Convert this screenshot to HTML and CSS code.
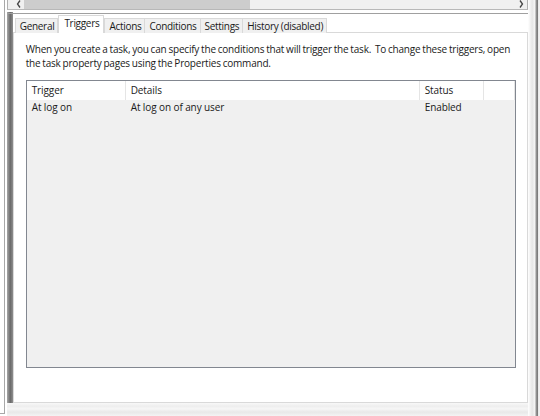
FILE: index.html
```html
<!DOCTYPE html>
<html>
<head>
<meta charset="utf-8">
<link rel="stylesheet" href="styles.css">
</head>
<body>
<div class="screen">
  <div class="edge-left"></div>
  <div class="shadow-band"></div>
  <div class="dialog">
    <div class="hscroll">
      <svg class="arrow" width="16" height="10" viewBox="0 0 16 10"><path d="M12 0.5 L9.5 4 L12 7.5" fill="none" stroke="#444" stroke-width="1.3"/></svg>
      <div class="track"><div class="thumb"></div></div>
      <svg class="arrow" width="12" height="10" viewBox="0 0 12 10"><path d="M5 0.5 L7.5 4 L5 7.5" fill="none" stroke="#444" stroke-width="1.3"/></svg>
    </div>
    <div class="dialog-body">
      <div class="tabs">
        <div class="tab">General</div>
        <div class="tab active">Triggers</div>
        <div class="tab">Actions</div>
        <div class="tab">Conditions</div>
        <div class="tab">Settings</div>
        <div class="tab">History (disabled)</div>
      </div>
      <div class="panel">
        <p class="desc">When you create a task, you can specify the conditions that will trigger the task.&nbsp; To change these triggers, open<br>the task property pages using the Properties command.</p>
        <div class="list">
          <div class="list-head">
            <div class="col c1">Trigger</div>
            <div class="col c2">Details</div>
            <div class="col c3">Status</div>
            <div class="col c4"></div>
          </div>
          <div class="list-row">
            <div class="cell c1">At log on</div>
            <div class="cell c2">At log on of any user</div>
            <div class="cell c3">Enabled</div>
          </div>
        </div>
      </div>
      <div class="footer"></div>
    </div>
  </div>
  <div class="edge-right"></div>
</div>
</body>
</html>
```

FILE: styles.css
```css
* { box-sizing: border-box; }
html, body { margin: 0; padding: 0; }
body {
  width: 540px;
  height: 416px;
  overflow: hidden;
  background: #ffffff;
  font-family: "Open Sans", "Noto Sans", sans-serif;
  font-size: 10px;
  letter-spacing: -0.1px;
  color: #1a1a1a;
}
.screen {
  display: flex;
  height: 416px;
}
.edge-left {
  width: 6px;
  height: 414px;
  border-right: 1px solid #a8a8a8;
  border-bottom: 1px solid #a8a8a8;
  background: #fff;
}
.shadow-band {
  width: 6px;
  margin-left: 2px;
  margin-top: 12px;
  margin-bottom: 11px;
  background: linear-gradient(to right, #a8a8a8, #6a6a6a 55%, #8e8e8e);
}
.dialog {
  flex: 1;
  display: flex;
  flex-direction: column;
  margin-left: -6px;
}
.hscroll {
  height: 10px;
  display: flex;
  align-items: stretch;
  background: #f0f0f0;
  border-bottom: 1px solid #b8b8b8;
  border-right: 1px solid #b0b0b0;
  border-left: 1px solid #b0b0b0;
}
.hscroll .arrow {
  flex: none;
  display: block;
}
.track { flex: 1; height: 100%; }
.thumb {
  width: 226px;
  height: 100%;
  background: #cdcdcd;
}
.dialog-body {
  flex: 1;
  margin-top: 3px;
  border-top: 1px solid #a0a0a0;
  display: flex;
  flex-direction: column;
  padding-left: 6px;
}
.tabs {
  display: flex;
  padding-left: 2px;
  height: 19px;
  align-items: flex-end;
  position: relative;
  z-index: 1;
  letter-spacing: -0.3px;
}
.tab {
  height: 15px;
  padding: 0 3px 0 4px;
  background: #f0f0f0;
  border: 1px solid #d9d9d9;
  border-bottom: none;
  margin-right: -1px;
  line-height: 14px;
  color: #1a1a1a;
}
.tab.active {
  height: 18px;
  background: #fff;
  margin-left: 1px;
  margin-right: 0;
  padding: 0 4px 0 5px;
  line-height: 15px;
}
.panel {
  flex: 1;
  background: #fff;
  border: 1px solid #d9d9d9;
  margin-top: -1px;
  padding: 8px 10px 34px 12px;
  display: flex;
  flex-direction: column;
}
.desc {
  margin: 0 0 10px 0;
  line-height: 14px;
  letter-spacing: -0.2px;
  word-spacing: -0.5px;
  white-space: nowrap;
  padding-top: 1px;
}
.list {
  flex: 1;
  border: 1px solid #828790;
  background: #f0f0f0;
  margin-right: 1px;
}
.list-head {
  display: flex;
  height: 19px;
  background: #fff;
}
.col {
  border-right: 1px solid #e5e5e5;
  padding-left: 5px;
  line-height: 19px;
}
.c1 { width: 99px; }
.c2 { width: 294px; }
.c3 { width: 64px; }
.c4 { width: 31px; }
.list-row {
  display: flex;
  height: 18px;
  line-height: 15px;
}
.cell { padding-left: 5px; }
.footer {
  height: 13px;
  margin-left: -6px;
  background: linear-gradient(#f8f8f8, #eeeeee 25%, #f6f6f6 45%, #e8e8e8 70%, #f4f4f4);
}
.edge-right {
  width: 14px;
  background: linear-gradient(to right, #ffffff, #f4f4f4 15%, #e6e6e6 35%, #f4f4f4 55%, #8a8a8a 72%, #6d6d6d 78%, #f0f0f0 88%);
}
```
